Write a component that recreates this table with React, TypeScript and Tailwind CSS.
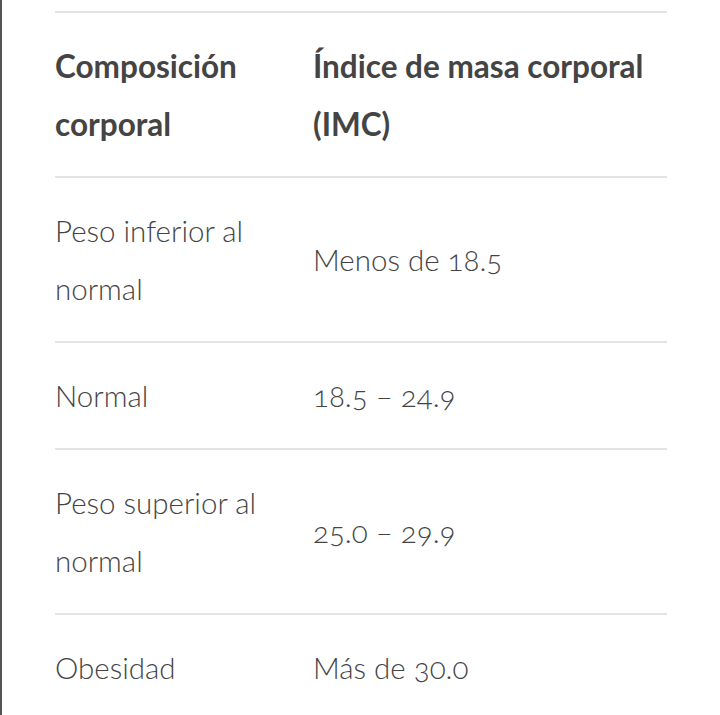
import React from "react";

const rows: [string, string][] = [
  ["Peso inferior al normal", "Menos de 18.5"],
  ["Normal", "18.5 – 24.9"],
  ["Peso superior al normal", "25.0 – 29.9"],
  ["Obesidad", "Más de 30.0"],
];

export default function App() {
  return (
    <div className="w-[720px] h-[715px] bg-white overflow-hidden border-l-2 border-[#555555]">
      <div className="pt-[11px] pl-[53px] w-[667px]">
        <table
          className="w-[612px] border-collapse text-[#444444] oldstyle-nums"
          style={{ fontFamily: "Lato, 'Open Sans', sans-serif" }}
        >
          <thead>
            <tr className="border-t-2 border-[#e3e3e3]">
              <th className="w-[258px] text-left align-middle font-bold text-[31.5px] leading-[58px] py-[23.5px] pr-4">
                Composición corporal
              </th>
              <th className="text-left align-middle font-bold text-[31.5px] leading-[58px] py-[23.5px]">
                Índice de masa corporal (IMC)
              </th>
            </tr>
          </thead>
          <tbody>
            {rows.map(([a, b]) => (
              <tr key={a} className="border-t-2 border-[#e3e3e3]">
                <td className="text-left align-middle font-light text-[29.5px] leading-[58px] py-[23.5px] pr-4">
                  {a}
                </td>
                <td className="text-left align-middle font-light text-[29.5px] leading-[58px] py-[23.5px]">
                  {b}
                </td>
              </tr>
            ))}
          </tbody>
        </table>
      </div>
    </div>
  );
}
